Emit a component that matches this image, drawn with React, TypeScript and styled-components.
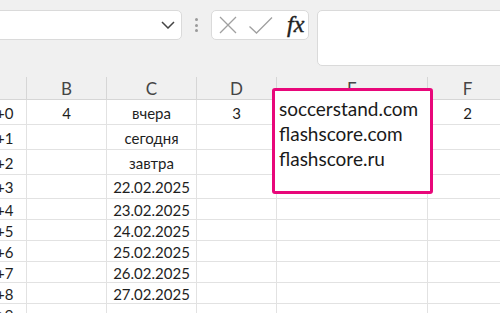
import React from "react";
import styled, { createGlobalStyle } from "styled-components";

const Global = createGlobalStyle`
  html, body { margin: 0; padding: 0; background: #f0f0f0; }
  body { font-family: Lato, "Liberation Sans", sans-serif; }
`;

const Page = styled.div`
  width: 500px;
  height: 313px;
  overflow: hidden;
  background: #f0f0f0;
`;

const Toolbar = styled.div`
  display: flex;
  align-items: flex-start;
  height: 77px;
  padding-top: 10px;
  box-sizing: border-box;
`;

const NameBox = styled.div`
  box-sizing: border-box;
  flex: 0 0 192px;
  margin-left: -10px;
  height: 30px;
  background: #fff;
  border: 1px solid #dadada;
  border-radius: 5px;
  display: flex;
  align-items: center;
  justify-content: flex-end;
  padding-right: 6px;
`;

const Grip = styled.div`
  flex: 0 0 29px;
  height: 30px;
  display: flex;
  flex-direction: column;
  align-items: center;
  justify-content: center;
  gap: 2.7px;
`;

const Dot = styled.span`
  width: 3px;
  height: 3px;
  border-radius: 50%;
  background: #9a9a9a;
`;

const FuncBox = styled.div`
  box-sizing: border-box;
  flex: 0 0 98px;
  height: 30px;
  background: #fff;
  border: 1px solid #dadada;
  border-radius: 5px;
  display: flex;
  align-items: center;
  padding-left: 7px;
`;

const IconSlot = styled.span<{ $gap: number }>`
  display: flex;
  margin-left: ${(p) => p.$gap}px;
`;

const Fx = styled.span`
  margin-left: 14px;
  font-family: "Liberation Serif", "DejaVu Serif", serif;
  font-style: italic;
  font-size: 24px;
  color: #222;
  line-height: 1;
  margin-top: -2px;
  -webkit-text-stroke: 0.4px #222;
`;

const FormulaBar = styled.div`
  box-sizing: border-box;
  flex: 0 0 200px;
  margin-left: 8px;
  height: 56px;
  background: #fff;
  border: 1px solid #dadada;
  border-radius: 5px;
`;

const Sheet = styled.div`
  position: relative;
  display: grid;
  grid-template-columns: 27px 80px 90px 80px 151px 80px;
  grid-template-rows: 23px 25px 25px 25px 24px repeat(6, 21px);
  background: #fff;
  width: 508px;
`;

const HeadCell = styled.div`
  box-sizing: border-box;
  background: #f0f0f0;
  border-right: 1px solid #d6d6d6;
  border-bottom: 1px solid #d6d6d6;
  display: flex;
  align-items: center;
  justify-content: center;
  font-size: 17px;
  color: #454545;
`;

const Cell = styled.div<{ $align?: "left" | "center" }>`
  box-sizing: border-box;
  border-right: 1px solid #e2e2e2;
  border-bottom: 1px solid #e2e2e2;
  display: flex;
  align-items: center;
  justify-content: ${(p) => (p.$align === "left" ? "flex-start" : "center")};
  padding-top: 1px;
  font-size: 15px;
  color: #1e1e1e;
  white-space: nowrap;
  overflow: hidden;
`;

const RowTag = styled.span`
  margin-left: -4px;
`;

const Callout = styled.div`
  position: absolute;
  left: 272px;
  top: 11px;
  width: 161px;
  height: 106px;
  box-sizing: border-box;
  border: 3px solid #e8077a;
  border-radius: 3px;
  background: #fff;
  padding: 5px 0 0 4px;
  font-size: 19px;
  line-height: 25px;
  color: #1a1a1a;
`;

const CalloutLine = styled.div`
  white-space: nowrap;
`;

const columns = ["", "B", "C", "D", "E", "F"];

const rows: string[][] = [
  ["+0", "4", "вчера", "3", "", "2"],
  ["+1", "", "сегодня", "", "", ""],
  ["+2", "", "завтра", "", "", ""],
  ["+3", "", "22.02.2025", "", "", ""],
  ["+4", "", "23.02.2025", "", "", ""],
  ["+5", "", "24.02.2025", "", "", ""],
  ["+6", "", "25.02.2025", "", "", ""],
  ["+7", "", "26.02.2025", "", "", ""],
  ["+8", "", "27.02.2025", "", "", ""],
  ["+9", "", "", "", "", ""],
];

const sites = ["soccerstand.com", "flashscore.com", "flashscore.ru"];

export default function App() {
  return (
    <Page>
      <Global />
      <Toolbar>
        <NameBox>
          <svg width="14" height="8" viewBox="0 0 14 8">
            <path d="M1 1 L7 7 L13 1" fill="none" stroke="#444" strokeWidth="1.5" />
          </svg>
        </NameBox>
        <Grip>
          <Dot />
          <Dot />
          <Dot />
        </Grip>
        <FuncBox>
          <IconSlot $gap={0}>
            <svg width="18" height="18" viewBox="0 0 18 18">
              <path d="M1 1 L17 17 M17 1 L1 17" stroke="#a0a0a0" strokeWidth="1.3" fill="none" />
            </svg>
          </IconSlot>
          <IconSlot $gap={12}>
            <svg width="24" height="17" viewBox="0 0 24 17">
              <path d="M0.5 9.5 L7.5 16 L23 0.5" stroke="#a0a0a0" strokeWidth="1.3" fill="none" />
            </svg>
          </IconSlot>
          <Fx>fx</Fx>
        </FuncBox>
        <FormulaBar />
      </Toolbar>
      <Sheet>
        {columns.map((c, i) => (
          <HeadCell key={"h" + i}>{c}</HeadCell>
        ))}
        {rows.map((r, ri) =>
          r.map((v, ci) => (
            <Cell key={ri + "-" + ci} $align={ci === 0 ? "left" : "center"}>
              {ci === 0 ? <RowTag>{v}</RowTag> : v}
            </Cell>
          ))
        )}
        <Callout>
          {sites.map((s) => (
            <CalloutLine key={s}>{s}</CalloutLine>
          ))}
        </Callout>
      </Sheet>
    </Page>
  );
}
